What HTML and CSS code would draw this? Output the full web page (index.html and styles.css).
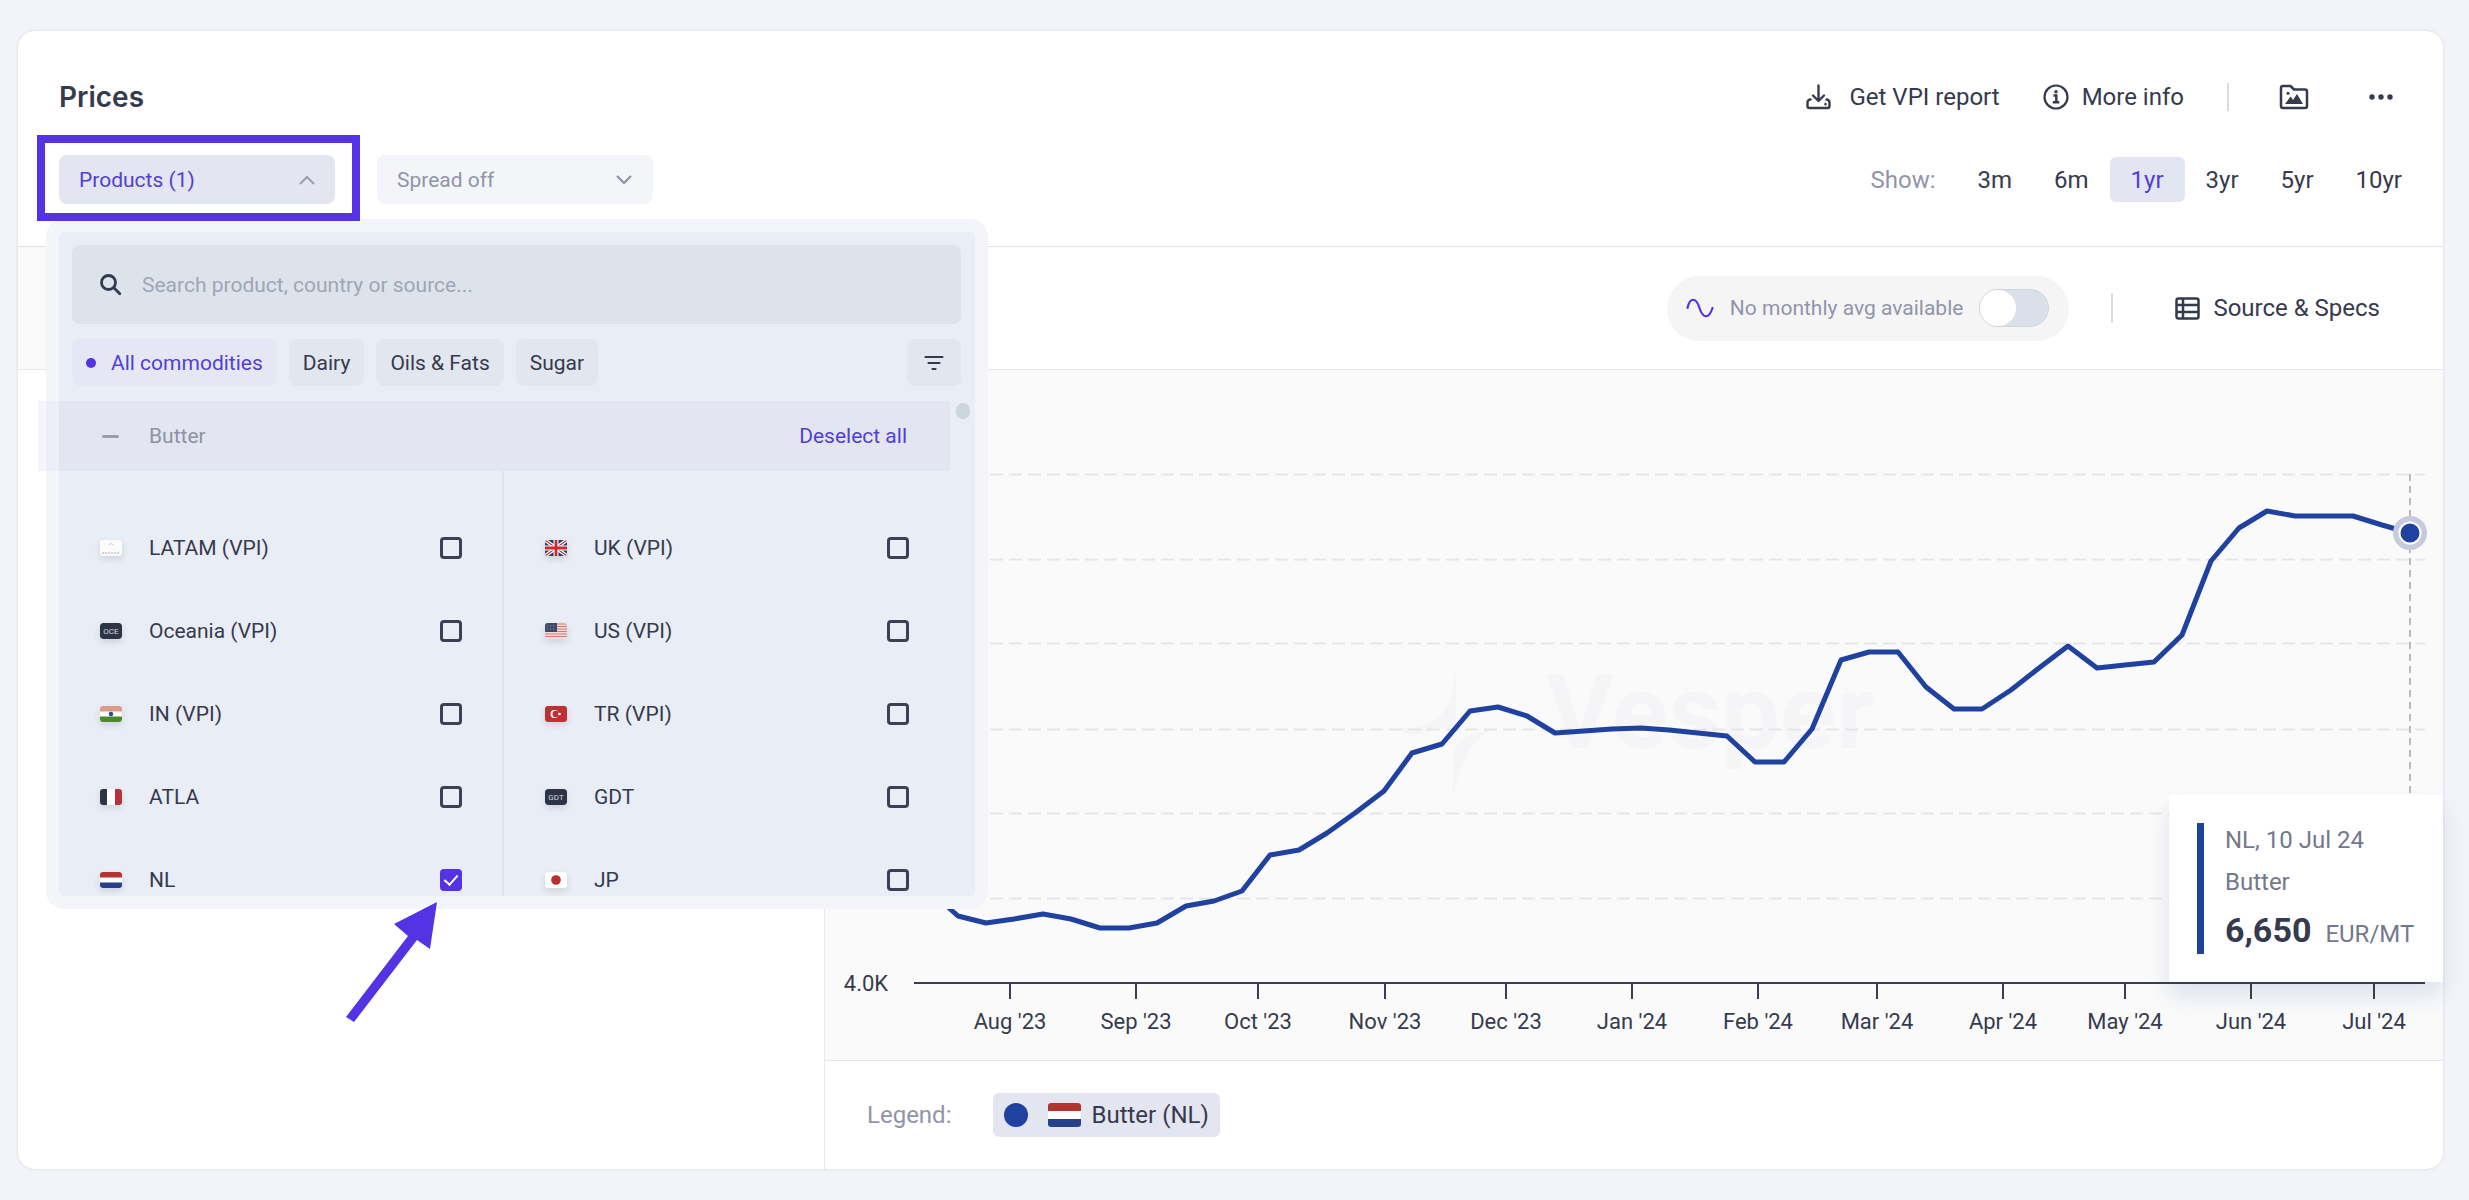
FILE: index.html
```html
<!DOCTYPE html>
<html lang="en">
<head>
<meta charset="utf-8">
<meta name="viewport" content="width=device-width, initial-scale=1">
<title>Prices</title>
<link rel="stylesheet" href="styles.css">
</head>
<body>
<main class="card">
  <header class="card-header">
    <div class="header-row">
      <h1 class="title">Prices</h1>
      <nav class="actions">
        <a class="action" href="#report">
          <svg class="icon" width="25" height="26" viewBox="0 0 25 26" fill="none" stroke="currentColor" stroke-width="2.4" stroke-linecap="round" stroke-linejoin="round"><path d="M12.5 1.5v15M7 11.5l5.500 5.500 5.500-5.500"/><path d="M4.500 15.500a3 3 0 0 0-3 3v3.500a2 2 0 0 0 2 2h18a2 2 0 0 0 2-2v-3.500a3 3 0 0 0-3-3"/><path d="M19.500 20v.3"/></svg>
          <span class="report-label">Get VPI report</span>
        </a>
        <a class="action" href="#info">
          <svg class="icon" width="26" height="26" viewBox="0 0 26 26" fill="none" stroke="currentColor" stroke-width="2.2"><circle cx="13" cy="13" r="11.500"/><path d="M10.500 11.500h2.800v6.500M9.800 18.200h6.500" stroke-width="2.400"/><circle cx="13" cy="7.800" r="1.700" fill="currentColor" stroke="none"/></svg>
          <span>More info</span>
        </a>
        <span class="divider"></span>
        <button class="icon-button" type="button" aria-label="Save image">
          <svg width="30" height="26" viewBox="0 0 30 26" fill="none" stroke="currentColor" stroke-width="2.500" stroke-linejoin="round"><path d="M2 4a2 2 0 0 1 2-2h7.500l3.500 3.500h11a2 2 0 0 1 2 2V22a2 2 0 0 1-2 2H4a2 2 0 0 1-2-2z"/><path d="M6 20l5.500-7.500 2.500 3.500 4-6L24 20z" fill="currentColor" stroke="none"/><circle cx="9" cy="9.300" r="1.500" fill="currentColor" stroke="none"/></svg>
        </button>
        <button class="icon-button" type="button" aria-label="More options">
          <svg width="26" height="8" viewBox="0 0 26 8" fill="currentColor"><circle cx="4" cy="4" r="2.700"/><circle cx="13" cy="4" r="2.700"/><circle cx="22" cy="4" r="2.700"/></svg>
        </button>
      </nav>
    </div>
    <div class="header-row">
      <div class="filters">
        <div class="picker">
          <button class="field field-open" type="button" aria-expanded="true">
            <span>Products (1)</span>
            <svg width="16" height="10" viewBox="0 0 16 10" fill="none" stroke="#9a9db4" stroke-width="2"><path d="M1 9l7-7 7 7"/></svg>
          </button>
          <span class="highlight"></span>
          <section class="dropdown" aria-label="Products">
            <div class="search">
              <svg width="23" height="23" viewBox="0 0 23 23" fill="none" stroke="#343a4d" stroke-width="2.800" stroke-linecap="round"><circle cx="9.500" cy="9.500" r="7"/><path d="M14.800 14.800l6 6"/></svg>
              <input class="search-input" type="text" placeholder="Search product, country or source..." aria-label="Search product, country or source">
            </div>
            <div class="chips">
              <button class="chip chip-active" type="button"><span class="chip-dot"></span>All commodities</button>
              <button class="chip" type="button">Dairy</button>
              <button class="chip" type="button">Oils &amp; Fats</button>
              <button class="chip" type="button">Sugar</button>
              <button class="chip chip-filter" type="button" aria-label="Filter">
                <svg width="20" height="16" viewBox="0 0 20 16" fill="none" stroke="#343a4d" stroke-width="2.200" stroke-linecap="round"><path d="M1.500 2h17M4.500 8h11M8.500 14h3"/></svg>
              </button>
            </div>
            <div class="list">
              <div class="group">
                <span class="dash"></span>
                <span class="group-name">Butter</span>
                <button class="deselect" type="button">Deselect all</button>
              </div>
              <span class="thumb"></span>
              <div class="options">
                <div class="column">
                  <label class="option"><svg class="flag" viewBox="0 0 22 16"><rect width="22" height="16" rx="3" fill="#fbfbfb"/><path d="M8.500 5q2.500-3 5 0" fill="none" stroke="#c9ccd4"/><path d="M2 13h18" stroke="#a9adb8" stroke-dasharray="2 1"/></svg><span>LATAM (VPI)</span><input class="check" type="checkbox"></label>
                  <label class="option"><svg class="flag" viewBox="0 0 22 16"><rect width="22" height="16" rx="3" fill="#2d3445"/><text class="flag-text" x="11" y="11">OCE</text></svg><span>Oceania (VPI)</span><input class="check" type="checkbox"></label>
                  <label class="option"><svg class="flag" viewBox="0 0 22 16"><rect width="22" height="16" fill="#fff"/><rect width="22" height="5.500" fill="#dd9a85"/><rect y="10.500" width="22" height="5.500" fill="#4b8b2c"/><circle cx="11" cy="8" r="2.200" fill="#2d4a94"/></svg><span>IN (VPI)</span><input class="check" type="checkbox"></label>
                  <label class="option"><svg class="flag" viewBox="0 0 22 16"><rect width="22" height="16" fill="#fff"/><rect width="7" height="16" fill="#2d3445"/><rect x="15" width="7" height="16" fill="#b73236"/></svg><span>ATLA</span><input class="check" type="checkbox"></label>
                  <label class="option"><svg class="flag" viewBox="0 0 22 16"><rect width="22" height="16" fill="#fff"/><rect width="22" height="5.500" fill="#b4342f"/><rect y="10.500" width="22" height="5.500" fill="#27408c"/></svg><span>NL</span><input class="check" type="checkbox" checked></label>
                </div>
                <div class="column">
                  <label class="option"><svg class="flag" viewBox="0 0 22 16"><rect width="22" height="16" fill="#2b3c6b"/><path d="M0 0l22 16M22 0L0 16" stroke="#fff" stroke-width="3.600"/><path d="M0 0l22 16M22 0L0 16" stroke="#c8343a" stroke-width="1.200"/><path d="M11 0v16M0 8h22" stroke="#fff" stroke-width="5"/><path d="M11 0v16M0 8h22" stroke="#c52b30" stroke-width="2.800"/></svg><span>UK (VPI)</span><input class="check" type="checkbox"></label>
                  <label class="option"><svg class="flag" viewBox="0 0 22 16"><rect width="22" height="16" fill="#f1dcda"/><path d="M0 1h22M0 3.500h22M0 6h22M0 8.500h22M0 11h22M0 13.500h22" stroke="#cf7d75" stroke-width="1.200"/><rect width="12" height="9" fill="#3f4a69"/><path d="M2 3h8M2 6h8" stroke="#8b93aa" stroke-dasharray="1 2"/></svg><span>US (VPI)</span><input class="check" type="checkbox"></label>
                  <label class="option"><svg class="flag" viewBox="0 0 22 16"><rect width="22" height="16" fill="#bf3033"/><circle cx="9.500" cy="8" r="4" fill="#fff"/><circle cx="10.700" cy="8" r="3.200" fill="#bf3033"/><circle cx="14.500" cy="8" r="1.300" fill="#fff"/></svg><span>TR (VPI)</span><input class="check" type="checkbox"></label>
                  <label class="option"><svg class="flag" viewBox="0 0 22 16"><rect width="22" height="16" rx="3" fill="#2d3445"/><text class="flag-text" x="11" y="11">GDT</text></svg><span>GDT</span><input class="check" type="checkbox"></label>
                  <label class="option"><svg class="flag" viewBox="0 0 22 16"><rect width="22" height="16" fill="#fff"/><circle cx="11" cy="8" r="4.800" fill="#bf2c30"/></svg><span>JP</span><input class="check" type="checkbox"></label>
                </div>
              </div>
            </div>
            <svg class="arrow" width="92" height="121" viewBox="0 0 92 121" fill="#5333e4"><path d="M91 0L84 47 71 38 8 120 0 115 62 34 48 22z"/></svg>
          </section>
        </div>
        <div class="select-wrap">
          <select class="field" aria-label="Spread"><option>Spread off</option></select>
          <svg class="select-chevron" width="16" height="10" viewBox="0 0 16 10" fill="none" stroke="#8e91a8" stroke-width="2.200"><path d="M1 1l7 7 7-7"/></svg>
        </div>
      </div>
      <div class="ranges">
        <span class="ranges-label">Show:</span>
        <button class="range" type="button">3m</button>
        <button class="range" type="button">6m</button>
        <button class="range range-active" type="button">1yr</button>
        <button class="range" type="button">3yr</button>
        <button class="range" type="button">5yr</button>
        <button class="range" type="button">10yr</button>
      </div>
    </div>
  </header>

  <div class="card-body">
    <aside class="sidebar"><div class="sidebar-head"></div></aside>
    <section class="content">
      <div class="toolbar">
        <label class="avg">
          <svg width="28" height="22" viewBox="0 0 28 22" fill="none" stroke="#5333e4" stroke-width="2.200" stroke-linecap="round"><path d="M1.500 11C4 0 10 0 13.500 11S23 22 26.500 11"/></svg>
          <span>No monthly avg available</span>
          <input class="toggle" type="checkbox" role="switch">
        </label>
        <span class="divider"></span>
        <a class="action source" href="#source">
          <svg width="25" height="23" viewBox="0 0 25 23" fill="none" stroke="currentColor" stroke-width="2.500"><rect x="1.500" y="1.500" width="22" height="20" rx="2"/><path d="M8 1.500v20M1.500 8h22M1.500 15h22"/></svg>
          <span>Source &amp; Specs</span>
        </a>
      </div>
      <div class="chart">
        <svg class="plot" viewBox="825 370 1618 690" role="img" aria-label="Butter price, EUR per MT">
          <g class="watermark">
            <path d="M1456 655C1456 710 1440 728 1402 728 1402 736 1420 736 1436 728L1456 728zM1453 795L1453 760C1453 742 1468 732 1492 730 1474 738 1464 755 1453 795z"/>
            <text x="1546" y="748">Vesper</text>
          </g>
          <path class="grid" d="M914 474.500H2425M914 559.500H2425M914 643.500H2425M914 729.500H2425M914 813.500H2425M914 898.500H2425"/>
          <path class="cursor" d="M2410 474V846"/>
          <path class="series" d="M929 890L958 916 986 923 1014 919 1043 914 1071 919 1100 928 1129 928 1157 923 1186 906 1214 901 1242 891 1270 855 1299 850 1327 833 1355 813 1384 791 1412 753 1442 744 1470 711 1498 707 1527 716 1555 733 1584 731 1612 729 1641 728 1669 730 1698 733 1727 736 1755 762 1784 762 1812 729 1841 660 1869 652 1898 652 1926 687 1954 709 1982 709 2011 690 2039 668 2068 646 2097 668 2125 665 2154 662 2182 635 2211 561 2239 528 2267 511 2295 516 2324 516 2353 516 2382 525 2410 533"/>
          <circle cx="2410" cy="533" r="17" fill="#c6cade"/>
          <circle cx="2410" cy="533" r="10.500" fill="#1f419f" stroke="#fff" stroke-width="2"/>
          <text class="tick-label" x="866" y="991">4.0K</text>
          <g class="tick-label">
            <text x="1010" y="1029">Aug '23</text><text x="1136" y="1029">Sep '23</text><text x="1258" y="1029">Oct '23</text><text x="1385" y="1029">Nov '23</text><text x="1506" y="1029">Dec '23</text><text x="1632" y="1029">Jan '24</text><text x="1758" y="1029">Feb '24</text><text x="1877" y="1029">Mar '24</text><text x="2003" y="1029">Apr '24</text><text x="2125" y="1029">May '24</text><text x="2251" y="1029">Jun '24</text><text x="2374" y="1029">Jul '24</text>
          </g>
        </svg>
        <div class="tooltip">
          <p class="tooltip-line">NL, 10 Jul 24</p>
          <p class="tooltip-line">Butter</p>
          <p class="tooltip-price"><strong class="price">6,650</strong> <span>EUR/MT</span></p>
        </div>
        <svg class="axis" viewBox="825 370 1618 690" aria-hidden="true"><path d="M914 983H2425M1010 983v16M1136 983v16M1258 983v16M1385 983v16M1506 983v16M1632 983v16M1758 983v16M1877 983v16M2003 983v16M2125 983v16M2251 983v16M2374 983v16"/></svg>
      </div>
      <footer class="legend">
        <span class="legend-label">Legend:</span>
        <button class="legend-item" type="button">
          <span class="legend-dot"></span>
          <svg class="legend-flag" width="33" height="24" viewBox="0 0 33 24"><rect width="33" height="24" fill="#fff"/><rect width="33" height="8" fill="#b4342f"/><rect y="16" width="33" height="8" fill="#27408c"/></svg>
          <span>Butter (NL)</span>
        </button>
      </footer>
    </section>
  </div>
</main>
</body>
</html>
```
FILE: styles.css
```css
:root {
  --ink: #363a4e;
  --muted: #9194aa;
  --accent: #5333e4;
  --accent-text: #5140d6;
  --series: #1f419f;
  --line: #e6e8ec;
}

* {
  box-sizing: border-box;
}

body {
  margin: 0;
  padding: 30px 25px 30px 17px;
  background: #f3f4f9;
  color: var(--ink);
  font: 24px/28px Roboto, "Liberation Sans", sans-serif;
}

button,
input,
select {
  margin: 0;
  border: 0;
  padding: 0;
  background: none;
  color: inherit;
  font: inherit;
}

.card {
  border: 1px solid var(--line);
  border-radius: 18px;
  background: #fff;
  box-shadow: 0 0 0 1px #eceef2;
}

.card-header {
  display: flex;
  flex-direction: column;
  gap: 36px;
  padding: 44px 20px 42px 41px;
  border-bottom: 1px solid #dfe1e6;
}

.header-row {
  display: flex;
  align-items: center;
  justify-content: space-between;
}

.title {
  margin: 0;
  font: 600 28px/44px Inter, Roboto, sans-serif;
}

.actions {
  display: flex;
  align-items: center;
  gap: 43px;
  padding-right: 20px;
}

.action {
  display: flex;
  align-items: center;
  gap: 13px;
  color: inherit;
  text-decoration: none;
}

.report-label {
  padding-left: 5px;
}

.divider {
  width: 2px;
  height: 28px;
  background: #d9dbe2;
}

.icon-button {
  display: flex;
  align-items: center;
  justify-content: center;
  width: 44px;
  height: 44px;
}

.filters {
  display: flex;
  gap: 42px;
  font-size: 21px;
}

.picker,
.select-wrap {
  position: relative;
}

.field {
  display: flex;
  align-items: center;
  justify-content: space-between;
  width: 276px;
  height: 49px;
  padding: 0 20px;
  border-radius: 8px;
  background: #f4f5f8;
  color: var(--muted);
  appearance: none;
}

.field-open {
  background: #e3e6f0;
  color: var(--accent-text);
}

.select-chevron {
  position: absolute;
  top: 20px;
  right: 21px;
  pointer-events: none;
}

.highlight {
  position: absolute;
  inset: -20px -25px -17px -22px;
  border: 8px solid var(--accent);
  pointer-events: none;
  z-index: 3;
}

.dropdown {
  position: absolute;
  top: 64px;
  left: -13px;
  z-index: 2;
  width: 942px;
  padding-top: 13px;
  border: 13px solid #f3f5f9;
  border-radius: 18px;
  background: #e9edf5;
}

.search {
  display: flex;
  align-items: center;
  gap: 20px;
  height: 79px;
  margin: 0 14px 0 13px;
  padding: 0 27px;
  border-radius: 8px;
  background: #dde3eb;
}

.search-input {
  flex: 1;
  outline: 0;
}

.search-input::placeholder {
  color: #a0a6b4;
  opacity: 1;
}

.chips {
  display: flex;
  gap: 12px;
  margin: 15px 14px 15px 13px;
}

.chip {
  display: flex;
  align-items: center;
  height: 47px;
  padding: 0 14px;
  border-radius: 8px;
  background: #e1e6ef;
}

.chip-active {
  background: #e5e8f4;
  color: var(--accent-text);
}

.chip-dot {
  width: 10px;
  height: 10px;
  margin-right: 15px;
  border-radius: 50%;
  background: var(--accent);
}

.chip-filter {
  justify-content: center;
  width: 54px;
  margin-left: auto;
}

.list {
  position: relative;
  height: 495px;
}

.group {
  display: flex;
  align-items: center;
  height: 70px;
  margin-right: 25px;
  padding: 0 43px;
  background: #e3e6f1;
  box-shadow: -21px 0 0 0 rgb(227 230 241 / 35%);
}

.dash {
  width: 17px;
  height: 3px;
  border-radius: 2px;
  background: #989cad;
}

.group-name {
  margin-left: 30px;
  color: #8d92a3;
}

.deselect {
  margin-left: auto;
  color: var(--accent-text);
}

.thumb {
  position: absolute;
  top: 2px;
  right: 5px;
  width: 14px;
  height: 16px;
  border-radius: 7px;
  background: #cdd5de;
}

.options {
  display: grid;
  grid-template-columns: 445px 1fr;
  height: 425px;
  overflow: hidden;
}

.column {
  padding: 35px 40px 0 41px;
}

.column:first-child {
  border-right: 2px solid #e0e4ea;
}

.column + .column {
  padding-right: 66px;
}

.option {
  display: flex;
  align-items: center;
  gap: 27px;
  height: 83px;
}

.flag {
  width: 22px;
  height: 16px;
  border-radius: 3px;
  box-shadow: 0 3px 6px rgb(60 70 100 / 15%);
}

.flag-text {
  fill: #d5d8e0;
  font-size: 8px;
  text-anchor: middle;
}

.check {
  width: 22px;
  height: 22px;
  margin-left: auto;
  border: 3px solid #3d4054;
  border-radius: 4px;
  appearance: none;
}

.check:checked {
  display: flex;
  justify-content: center;
  border-color: var(--accent);
  background: var(--accent);
}

.check:checked::after {
  content: "";
  width: 6px;
  height: 11px;
  border: solid #fff;
  border-width: 0 2px 2px 0;
  transform: rotate(42deg);
}

.arrow {
  position: absolute;
  top: 670px;
  left: 287px;
}

.ranges {
  display: flex;
  align-items: center;
}

.ranges-label {
  margin-right: 21px;
  color: var(--muted);
}

.range {
  height: 45px;
  padding: 0 21px;
  border-radius: 6px;
}

.range-active {
  background: #e3e5f0;
  color: var(--accent-text);
}

.card-body {
  display: grid;
  grid-template-columns: 807px 1fr;
}

.sidebar {
  border-right: 1px solid var(--line);
}

.sidebar-head,
.toolbar {
  height: 123px;
  border-bottom: 1px solid var(--line);
}

.sidebar-head {
  background: #fafafa;
}

.toolbar {
  display: flex;
  align-items: center;
  justify-content: flex-end;
  gap: 42px;
  padding-right: 63px;
}

.avg {
  display: flex;
  align-items: center;
  gap: 16px;
  height: 65px;
  padding: 0 20px 0 19px;
  border-radius: 33px;
  background: #f5f5f6;
  color: var(--muted);
  font-size: 21px;
}

.toggle {
  width: 70px;
  height: 38px;
  border: 1px solid #cfd6df;
  border-radius: 19px;
  background: #dae0e9;
  appearance: none;
}

.toggle::before {
  content: "";
  display: block;
  width: 36px;
  height: 36px;
  border-radius: 50%;
  background: #fff;
}

.source {
  padding-left: 20px;
}

.chart {
  position: relative;
  border-bottom: 1px solid var(--line);
  background: #fafafa;
}

.plot {
  display: block;
  width: 100%;
}

.axis {
  position: absolute;
  inset: 0;
  width: 100%;
  fill: none;
  stroke: #3b3c50;
  stroke-width: 2;
}

.watermark {
  fill: #f5f5f7;
  font: 700 104px Roboto, sans-serif;
}

.grid {
  fill: none;
  stroke: #e6e6e8;
  stroke-width: 2;
  stroke-dasharray: 13 6;
}

.cursor {
  stroke: #b9bac2;
  stroke-width: 2;
  stroke-dasharray: 7 5;
}

.series {
  fill: none;
  stroke: var(--series);
  stroke-width: 5;
  stroke-linejoin: round;
}

.tick-label {
  fill: var(--ink);
  font-size: 22px;
  text-anchor: middle;
}

.tooltip {
  position: absolute;
  right: 0;
  bottom: 78px;
  width: 274px;
  padding: 24px 28px 20px;
  background: #fff;
  box-shadow: 0 14px 20px rgb(150 170 205 / 28%);
  color: #74788d;
}

.tooltip::before {
  content: "";
  position: absolute;
  top: 28px;
  bottom: 28px;
  left: 28px;
  width: 7px;
  background: var(--series);
}

.tooltip-line,
.tooltip-price {
  margin: 0;
  padding-left: 28px;
  line-height: 42px;
  white-space: nowrap;
}

.tooltip-price {
  display: flex;
  align-items: baseline;
  gap: 14px;
  line-height: 55px;
}

.price {
  color: var(--ink);
  font-size: 34px;
}

.legend {
  display: flex;
  align-items: center;
  gap: 42px;
  height: 108px;
  padding: 0 42px;
}

.legend-label {
  color: var(--muted);
}

.legend-item {
  display: flex;
  align-items: center;
  gap: 10px;
  height: 44px;
  padding: 0 11px;
  border-radius: 6px;
  background: #e3e6f0;
}

.legend-dot {
  width: 24px;
  height: 24px;
  margin-right: 10px;
  border-radius: 50%;
  background: var(--series);
}

.legend-flag {
  border-radius: 3px;
}
```
